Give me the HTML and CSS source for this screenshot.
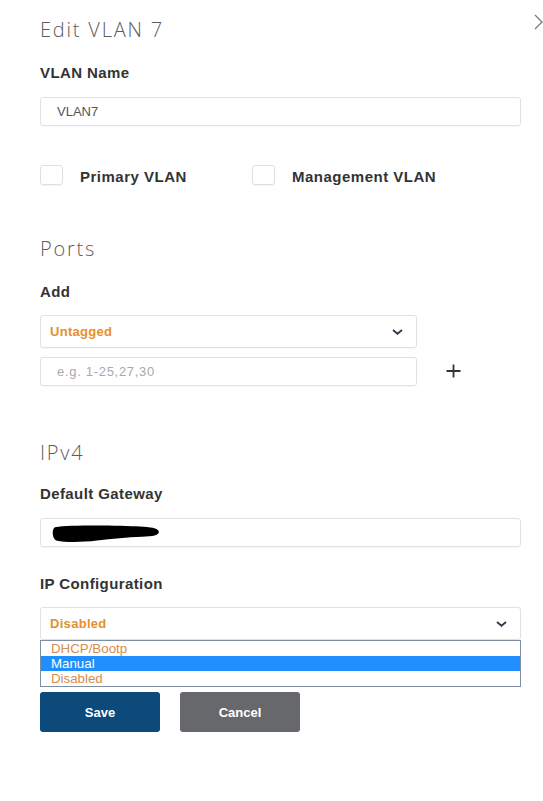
FILE: index.html
```html
<!DOCTYPE html>
<html lang="en">
<head>
<meta charset="utf-8">
<title>Edit VLAN 7</title>
<link rel="stylesheet" href="styles.css">
</head>
<body>
<div class="panel">
  <button class="close" aria-label="Close">
    <svg width="9" height="16" viewBox="0 0 9 16"><path d="M1 1 L8 8 L1 15" fill="none" stroke="#7a7a7a" stroke-width="1.3"/></svg>
  </button>
  <h1 class="title">Edit VLAN 7</h1>

  <div class="label label-name">VLAN Name</div>
  <div class="field"><span class="value">VLAN7</span></div>

  <div class="checks">
    <div class="check"><span class="box"></span><span class="check-text">Primary VLAN</span></div>
    <div class="check"><span class="box"></span><span class="check-text">Management VLAN</span></div>
  </div>

  <h2 class="section section-ports">Ports</h2>
  <div class="label label-add">Add</div>
  <div class="select select-narrow">
    <span class="select-text">Untagged</span>
    <svg class="chev" width="11" height="6" viewBox="0 0 11 6"><path d="M1 1 L5.5 4.8 L10 1" fill="none" stroke="#2b3a4a" stroke-width="1.8"/></svg>
  </div>
  <div class="port-row">
    <div class="field field-narrow"><span class="placeholder">e.g. 1-25,27,30</span></div>
    <svg class="plus" width="15" height="14" viewBox="0 0 15 14"><path d="M7.5 0.5 V13.5 M0.5 7 H14.5" fill="none" stroke="#333" stroke-width="1.8"/></svg>
  </div>

  <h2 class="section section-ipv4">IPv4</h2>
  <div class="label label-gw">Default Gateway</div>
  <div class="field field-gw">
    <svg class="blob" width="108" height="18" viewBox="0 0 108 18"><path d="M3 2.2 C20 -0.3 70 0.6 88 1.6 C98 2.2 106 3 106.8 6.5 C107.5 10 102 11.6 90 11.8 C75 12.2 60 13.8 45 15.6 C30 17.6 12 17.4 5 15.8 C0 14.4 -0.6 4 3 2.2 Z" fill="#000"/></svg>
  </div>

  <div class="label label-ipc">IP Configuration</div>
  <div class="select-wrap">
    <div class="select">
      <span class="select-text">Disabled</span>
      <svg class="chev" width="11" height="6" viewBox="0 0 11 6"><path d="M1 1 L5.5 4.8 L10 1" fill="none" stroke="#2b3a4a" stroke-width="1.8"/></svg>
    </div>
    <ul class="options">
      <li>DHCP/Bootp</li>
      <li class="active">Manual</li>
      <li>Disabled</li>
    </ul>
  </div>

  <div class="actions">
    <button class="btn btn-save">Save</button>
    <button class="btn btn-cancel">Cancel</button>
  </div>
</div>
</body>
</html>
```

FILE: styles.css
```css
html, body {
  margin: 0;
  padding: 0;
  background: #fff;
}

.panel {
  position: relative;
  width: 481px;
  padding: 16px 22px 0 40px;
  font-family: "Liberation Sans", Arial, sans-serif;
}

.close {
  position: absolute;
  top: 14px;
  left: 534px;
  padding: 0;
  border: 0;
  background: none;
  line-height: 0;
}

.title,
.section {
  margin: 0;
  font-family: "Open Sans", "Lato", sans-serif;
  font-weight: 300;
  font-size: 20px;
  line-height: 28px;
  letter-spacing: 1.8px;
  color: #5c5c5c;
}

.section-ports { margin-top: 51px; }
.section-ipv4 { margin-top: 53px; }

.label {
  font-weight: 700;
  font-size: 15px;
  line-height: 18px;
  letter-spacing: 0.4px;
  color: #333;
}

.label-name { margin-top: 20px; }
.label-add { margin-top: 20px; }
.label-gw { margin-top: 18px; }
.label-ipc { margin-top: 28px; }

.field {
  box-sizing: border-box;
  height: 29px;
  margin-top: 15px;
  border: 1px solid #e1e1e1;
  border-radius: 3px;
  box-shadow: 0 1px 1px rgba(0, 0, 0, 0.04);
  display: flex;
  align-items: center;
  padding-left: 16px;
  font-size: 13px;
}

.value { color: #555; }

.placeholder {
  color: #a9a9a9;
  letter-spacing: 0.7px;
}

.checks {
  display: grid;
  grid-template-columns: 212px auto;
  margin-top: 38px;
  height: 20px;
}

.check {
  display: flex;
  align-items: center;
  gap: 17px;
}

.box {
  box-sizing: border-box;
  width: 23px;
  height: 20px;
  border: 1px solid #e0e0e0;
  border-radius: 3px;
  box-shadow: 0 1px 1px rgba(0, 0, 0, 0.05);
}

.check-text {
  padding-top: 4px;
  font-weight: 700;
  font-size: 15px;
  line-height: 18px;
  letter-spacing: 0.5px;
  color: #333;
}

.select {
  box-sizing: border-box;
  height: 33px;
  border: 1px solid #e1e1e1;
  border-radius: 3px;
  box-shadow: 0 1px 1px rgba(0, 0, 0, 0.04);
  display: flex;
  align-items: center;
  justify-content: space-between;
  padding: 0 13px 0 9px;
}

.select-narrow {
  width: 377px;
  margin-top: 14px;
}

.select-text {
  font-weight: 700;
  font-size: 13px;
  letter-spacing: 0.3px;
  color: #e68f2e;
}

.chev { display: block; margin-top: 1px; }

.port-row {
  display: flex;
  align-items: center;
  gap: 29px;
  margin-top: 9px;
}

.field-narrow {
  width: 377px;
  margin-top: 0;
}

.plus { display: block; margin-top: -2px; }

.field-gw { padding-left: 11px; padding-top: 2px; }

.blob { display: block; }

.select-wrap {
  position: relative;
  margin-top: 14px;
}

.options {
  position: absolute;
  top: 33px;
  left: 0;
  right: 0;
  margin: 0;
  padding: 0;
  list-style: none;
  border: 1px solid #7d8ea3;
  background: #fff;
}

.options li {
  height: 15px;
  line-height: 15px;
  padding-left: 10px;
  font-size: 13.3px;
  color: #d78c4c;
}

.options li.active {
  background: #1e8ffc;
  color: #fff;
}

.actions {
  display: flex;
  gap: 20px;
  margin-top: 52px;
}

.btn {
  width: 120px;
  height: 40px;
  border: 0;
  border-radius: 3px;
  font-family: "Liberation Sans", Arial, sans-serif;
  font-weight: 700;
  font-size: 13px;
  color: #fff;
}

.btn-save { background: #0b4a7a; }
.btn-cancel { background: #67686c; }
```
